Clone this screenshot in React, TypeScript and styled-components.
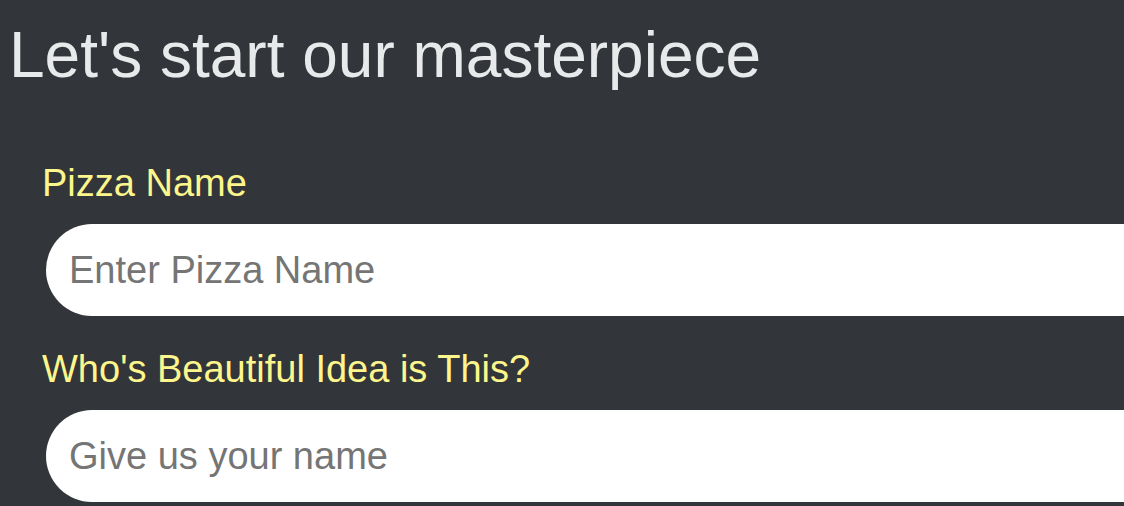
import React from "react";
import styled, { createGlobalStyle } from "styled-components";

const GlobalStyle = createGlobalStyle`
  html, body {
    margin: 0;
    padding: 0;
    background: #323539;
    overflow: hidden;
  }
  body {
    font-family: "Liberation Sans", Arial, Helvetica, sans-serif;
  }
`;

const Page = styled.main`
  min-height: 506px;
  background: #323539;
  padding: 18px 0 0 9px;
  box-sizing: border-box;
  overflow: hidden;
`;

const Title = styled.h1`
  margin: 0;
  font-size: 64px;
  font-weight: 400;
  line-height: normal;
  color: #e8e9eb;
`;

const Form = styled.form`
  margin-top: 70px;
  padding-left: 33px;
  display: flex;
  flex-direction: column;
  gap: 32px;
`;

const Field = styled.div`
  display: flex;
  flex-direction: column;
  gap: 19px;
`;

const Label = styled.label`
  font-size: 38px;
  line-height: normal;
  color: #fdf68c;
`;

const Input = styled.input`
  margin-left: 4px;
  width: 1300px;
  height: 92px;
  box-sizing: border-box;
  border: none;
  outline: none;
  border-radius: 46px;
  background: #ffffff;
  padding: 0 0 0 23px;
  font-family: "Liberation Sans", Arial, Helvetica, sans-serif;
  font-size: 38px;
  color: #222;
  &::placeholder {
    color: #757575;
  }
`;

export default function App() {
  return (
    <>
      <GlobalStyle />
      <Page>
        <Title>Let's start our masterpiece</Title>
        <Form onSubmit={(e) => e.preventDefault()}>
          <Field>
            <Label htmlFor="pizza-name">Pizza Name</Label>
            <Input id="pizza-name" placeholder="Enter Pizza Name" />
          </Field>
          <Field>
            <Label htmlFor="author">Who's Beautiful Idea is This?</Label>
            <Input id="author" placeholder="Give us your name" />
          </Field>
        </Form>
      </Page>
    </>
  );
}
